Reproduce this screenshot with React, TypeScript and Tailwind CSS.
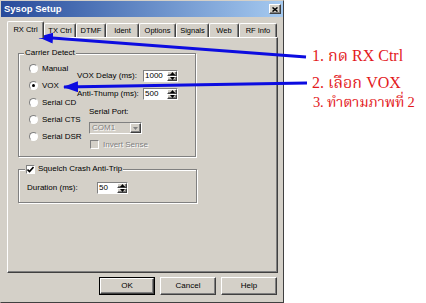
import React from 'react';

// กล่อง/ปุ่มแบบนูน (Windows classic)
function Raised({ className = '', children }: { className?: string; children?: React.ReactNode }) {
  return (
    <div
      className={`border border-t-white border-l-white border-r-[#404040] border-b-[#404040] bg-[#d4d0c8] shadow-[inset_-1px_-1px_0_#808080] ${className}`}
    >
      {children}
    </div>
  );
}

function Tri({ up, color = '#000' }: { up?: boolean; color?: string }) {
  return (
    <svg width="5" height="3" viewBox="0 0 5 3">
      <path d={up ? 'M0 3 L2.5 0 L5 3 Z' : 'M0 0 L2.5 3 L5 0 Z'} fill={color} />
    </svg>
  );
}

function Spin({ value, width }: { value: string; width: string }) {
  return (
    <div className={`flex h-[12px] ${width} shrink-0 border border-t-[#808080] border-l-[#808080] border-r-white border-b-white bg-white`}>
      <div className="flex-1 pl-[1px] leading-[10px]">{value}</div>
      <div className="flex w-[10px] flex-col">
        <Raised className="flex flex-1 items-center justify-center">
          <Tri up />
        </Raised>
        <Raised className="flex flex-1 items-center justify-center">
          <Tri />
        </Raised>
      </div>
    </div>
  );
}

function Radio({ label, on }: { label: string; on?: boolean }) {
  return (
    <div className="flex h-[17px] items-center gap-[4px] whitespace-nowrap">
      <div className="flex h-[9px] w-[9px] shrink-0 items-center justify-center rounded-full border border-t-[#808080] border-l-[#808080] border-r-white border-b-white bg-white">
        {on && <div className="h-[3px] w-[3px] rounded-full bg-black" />}
      </div>
      <span>{label}</span>
    </div>
  );
}

function Check({ on, disabled }: { on?: boolean; disabled?: boolean }) {
  return (
    <div
      className={`flex h-[9px] w-[9px] shrink-0 items-center justify-center border border-t-[#808080] border-l-[#808080] border-r-white border-b-white ${
        disabled ? 'bg-[#d4d0c8]' : 'bg-white'
      }`}
    >
      {on && (
        <svg width="7" height="7" viewBox="0 0 7 7">
          <path d="M0.5 3.5 L2.5 5.5 L6.5 1" stroke="#000" strokeWidth="1.6" fill="none" />
        </svg>
      )}
    </div>
  );
}

const tabs = [
  { name: 'RX Ctrl', w: 'w-[37px]' },
  { name: 'TX Ctrl', w: 'w-[32px]' },
  { name: 'DTMF', w: 'w-[30px]' },
  { name: 'Ident', w: 'w-[33px]' },
  { name: 'Options', w: 'w-[37px]' },
  { name: 'Signals', w: 'w-[33px]' },
  { name: 'Web', w: 'w-[30px]' },
  { name: 'RF Info', w: 'w-[38px]' },
];

const etched = 'border border-[#808080] shadow-[inset_1px_1px_0_#fff,1px_1px_0_#fff]';

export default function App() {
  return (
    <div className="relative flex h-[303px] w-[426px] overflow-hidden bg-white">
      {/* หน้าต่าง Sysop Setup */}
      <div className="flex h-[303px] w-[284px] shrink-0 flex-col border border-t-[#d4d0c8] border-l-[#d4d0c8] border-r-[#404040] border-b-[#404040] bg-[#d4d0c8] font-['Liberation_Sans',Arial,sans-serif] text-[8px] text-black">
        {/* title bar */}
        <div className="flex h-[16px] items-center justify-between bg-gradient-to-r from-[#284a9a] to-[#a6caf0] pl-[3px] pr-[2px]">
          <span className="text-[9.5px] font-bold text-white">Sysop Setup</span>
          <Raised className="flex h-[10px] w-[12px] items-center justify-center">
            <svg width="6" height="5" viewBox="0 0 6 5">
              <path d="M0.5 0.5 L5.5 4.5 M5.5 0.5 L0.5 4.5" stroke="#000" strokeWidth="1.5" />
            </svg>
          </Raised>
        </div>

        {/* tabs */}
        <div className="mt-[4px] flex h-[16px] items-end pl-[6px]">
          {tabs.map((t, i) => (
            <div
              key={t.name}
              className={`flex ${t.w} items-center justify-center whitespace-nowrap rounded-t-[2px] border-t border-l border-r border-t-white border-l-white border-r-[#404040] bg-[#d4d0c8] text-[7.5px] shadow-[inset_-1px_0_0_#808080] ${
                i === 0 ? 'relative z-10 -mb-[1px] h-[17px] pb-[1px]' : 'h-[14px]'
              }`}
            >
              {t.name}
            </div>
          ))}
        </div>

        {/* tab panel */}
        <div className="ml-[6px] h-[236px] w-[271px] border border-t-white border-l-white border-r-[#404040] border-b-[#404040] pl-[10px] pt-[15px] shadow-[inset_-1px_-1px_0_#808080]">
          {/* Carrier Detect */}
          <div className={`h-[104px] w-[178px] ${etched}`}>
            <div className="-mt-[6px] ml-[5px] w-fit bg-[#d4d0c8] px-[1px] leading-[10px]">Carrier Detect</div>
            <div className="flex">
              <div className="mt-[2px] w-[58px] shrink-0 pl-[10px]">
                <Radio label="Manual" />
                <Radio label="VOX" on />
                <Radio label="Serial CD" />
                <Radio label="Serial CTS" />
                <Radio label="Serial DSR" />
              </div>
              <div className="mt-[12px] flex flex-col whitespace-nowrap">
                <div className="flex h-[12px] items-center">
                  <span className="w-[66px] shrink-0">VOX Delay (ms):</span>
                  <Spin value="1000" width="w-[35px]" />
                </div>
                <div className="mt-[6px] flex h-[12px] items-center">
                  <span className="w-[66px] shrink-0">Anti-Thump (ms):</span>
                  <Spin value="500" width="w-[35px]" />
                </div>
                <div className="mt-[7px] pl-[12px] leading-[10px]">Serial Port:</div>
                <div className="ml-[12px] mt-[5px] flex h-[12px] w-[53px] border border-t-[#808080] border-l-[#808080] border-r-white border-b-white bg-[#d4d0c8]">
                  <span className="flex-1 pl-[2px] leading-[10px] text-[#808080] [text-shadow:1px_1px_0_#fff]">COM1</span>
                  <Raised className="flex w-[11px] items-center justify-center">
                    <Tri color="#808080" />
                  </Raised>
                </div>
                <div className="ml-[13px] mt-[6px] flex h-[9px] items-center gap-[4px]">
                  <Check disabled />
                  <span className="text-[#808080] [text-shadow:1px_1px_0_#fff]">Invert Sense</span>
                </div>
              </div>
            </div>
          </div>

          {/* Squelch Crash Anti-Trip */}
          <div className={`mt-[12px] h-[34px] w-[179px] ${etched}`}>
            <div className="-mt-[6px] ml-[6px] flex h-[10px] w-fit items-center gap-[3px] whitespace-nowrap bg-[#d4d0c8] px-[1px]">
              <Check on />
              <span>Squelch Crash Anti-Trip</span>
            </div>
            <div className="mt-[8px] flex h-[12px] items-center whitespace-nowrap pl-[8px]">
              <span className="w-[70px] shrink-0">Duration (ms):</span>
              <Spin value="50" width="w-[31px]" />
            </div>
          </div>
        </div>

        {/* buttons */}
        <div className="mt-[4px] flex h-[18px] justify-end gap-[5px] pr-[6px]">
          <div className="flex w-[56px] border border-black">
            <Raised className="flex flex-1 items-center justify-center">OK</Raised>
          </div>
          <Raised className="flex w-[56px] items-center justify-center">Cancel</Raised>
          <Raised className="flex w-[56px] items-center justify-center">Help</Raised>
        </div>
      </div>

      {/* คำอธิบาย */}
      <div className="ml-[28px] flex flex-col whitespace-nowrap pt-[47px] font-['Liberation_Serif','Noto_Serif_Thai','Noto_Sans_Thai',serif] text-[16px] leading-[18px] text-[#e3191c]">
        <span>1. กด RX Ctrl</span>
        <span className="mt-[9px]">2. เลือก VOX</span>
        <span className="ml-[1px] mt-[1px] text-[14.5px] tracking-[-0.2px]">3. ทำตามภาพที่ 2</span>
      </div>

      {/* ลูกศร */}
      <svg className="pointer-events-none absolute inset-0" width="426" height="303" viewBox="0 0 426 303">
        <defs>
          <marker id="head" markerUnits="userSpaceOnUse" viewBox="0 0 15 11" markerWidth="15" markerHeight="11" refX="14" refY="5.5" orient="auto">
            <path d="M0 0 L15 5.5 L0 11 Z" fill="#0c0ce0" />
          </marker>
        </defs>
        <line x1="306" y1="57" x2="39" y2="37" stroke="#0c0ce0" strokeWidth="3" markerEnd="url(#head)" />
        <line x1="307" y1="83" x2="64" y2="87" stroke="#0c0ce0" strokeWidth="3" markerEnd="url(#head)" />
      </svg>
    </div>
  );
}
